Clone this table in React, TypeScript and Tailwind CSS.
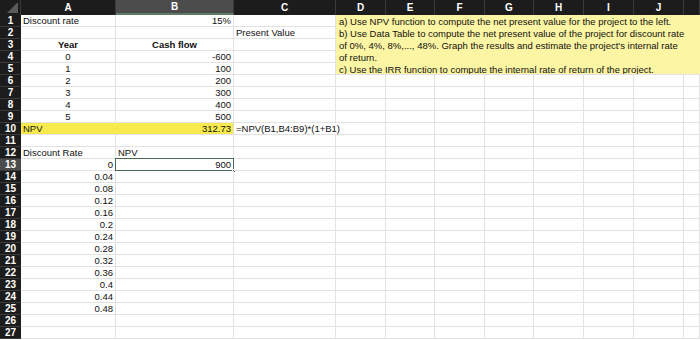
import React from 'react'

type Cell = {
  text?: string
  align?: 'left' | 'right' | 'center'
  bold?: boolean
  span?: string
  selected?: boolean
}

const COLS = ['A', 'B', 'C', 'D', 'E', 'F', 'G', 'H', 'I', 'J', '']

const NOTE = [
  'a) Use NPV function to compute the net present value for the project to the left.',
  'b) Use Data Table to compute the net present value of the project for discount rate',
  "of 0%, 4%, 8%,..., 48%.  Graph the results and estimate the project's internal rate",
  'of return.',
  'c) Use the IRR function to compute the internal rate of return of the project.',
]

const rates = ['0.04', '0.08', '0.12', '0.16', '0.2', '0.24', '0.28', '0.32', '0.36', '0.4', '0.44', '0.48']

function rowCells(r: number): Cell[] {
  const empty = (n: number): Cell[] => Array.from({ length: n }, () => ({}))
  if (r === 1)
    return [
      { text: 'Discount rate' },
      { text: '15%', align: 'right' },
      {},
      { span: 'note' },
    ]
  if (r >= 2 && r <= 5) {
    if (r === 2) return [{}, {}, { text: 'Present Value' }]
    if (r === 3) return [{ text: 'Year', align: 'center', bold: true }, { text: 'Cash flow', align: 'center', bold: true }, {}]
    if (r === 4) return [{ text: '0', align: 'center' }, { text: '-600', align: 'right' }, {}]
    return [{ text: '1', align: 'center' }, { text: '100', align: 'right' }, {}]
  }
  if (r >= 6 && r <= 9) {
    const flows = ['200', '300', '400', '500']
    return [{ text: String(r - 4), align: 'center' }, { text: flows[r - 6], align: 'right' }, ...empty(9)]
  }
  if (r === 10)
    return [
      { span: 'npv' },
      { text: '=NPV(B1,B4:B9)*(1+B1)', span: 'formula' },
      ...empty(7),
    ]
  if (r === 12) return [{ text: 'Discount Rate' }, { text: 'NPV' }, ...empty(9)]
  if (r === 13) return [{ text: '0', align: 'right' }, { text: '900', align: 'right', selected: true }, ...empty(9)]
  if (r >= 14 && r <= 25) return [{ text: rates[r - 14], align: 'right' }, ...empty(10)]
  return empty(11)
}

function GridCell({ cell }: { cell: Cell }) {
  if (cell.span === 'note') {
    return (
      <div className="col-span-8 row-span-5 bg-[#fcf5a3] border-b border-[#e2e2e2] pl-[3px] pt-[1px] overflow-hidden whitespace-nowrap">
        {NOTE.map((line) => (
          <div key={line} className="h-[12px] leading-[12px]">{line}</div>
        ))}
      </div>
    )
  }
  if (cell.span === 'npv') {
    return (
      <div className="col-span-2 bg-[#f7ea4f] border-r border-b border-[#e2e2e2] flex items-center justify-between px-[2px] leading-[12px]">
        <span>NPV</span>
        <span>312.73</span>
      </div>
    )
  }
  const align =
    cell.align === 'right' ? 'justify-end' : cell.align === 'center' ? 'justify-center' : 'justify-start'
  return (
    <div
      className={
        'relative flex items-center px-[2px] leading-[12px] whitespace-nowrap border-r border-b border-[#e2e2e2] ' +
        align +
        (cell.span === 'formula' ? ' col-span-2' : '') +
        (cell.bold ? ' font-bold' : '')
      }
    >
      {cell.text}
      {cell.selected && (
        <>
          <div className="absolute -left-px -top-px -right-px -bottom-px border-[1.5px] border-[#496a55]" />
          <div className="absolute -right-[3px] -bottom-[3px] w-[4px] h-[4px] bg-[#496a55] border border-white" />
        </>
      )}
    </div>
  )
}

export default function App() {
  const rows = Array.from({ length: 27 }, (_, i) => i + 1)
  return (
    <div
      className="w-[700px] h-[340px] overflow-hidden bg-white text-[9.5px] text-[#111]"
      style={{ fontFamily: '"Liberation Sans", Arial, sans-serif' }}
    >
      <div className="grid grid-cols-[21px_95px_118px_102px_50px_49px_50px_49px_50px_50px_50px_1fr] grid-rows-[15px_repeat(27,12px)]">
        {/* Header */}
        <div className="relative bg-[#1c1c1c] border-r border-[#3a3a3a] overflow-hidden">
          <div className="absolute right-[2px] bottom-[2px] w-0 h-0 border-l-[11px] border-l-transparent border-b-[11px] border-b-[#5a5a5a]" />
        </div>
        {COLS.map((c, i) => (
          <div
            key={i}
            className={
              'flex items-center justify-center text-white font-bold text-[10px] border-r border-[#3a3a3a] ' +
              (c === 'B' ? 'bg-[#4c4c4c] border-b-2 border-b-[#5e7a66]' : 'bg-[#1c1c1c]')
            }
          >
            {c}
          </div>
        ))}

        {rows.map((r) => (
          <React.Fragment key={r}>
            <div
              className={
                'flex items-center justify-center text-white font-bold text-[10px] leading-[12px] border-b border-[#3a3a3a] ' +
                (r === 13 ? 'bg-[#4c4c4c]' : 'bg-[#1c1c1c]')
              }
            >
              {r}
            </div>
            {rowCells(r).map((cell, i) => (
              <GridCell key={i} cell={cell} />
            ))}
          </React.Fragment>
        ))}
      </div>
    </div>
  )
}
